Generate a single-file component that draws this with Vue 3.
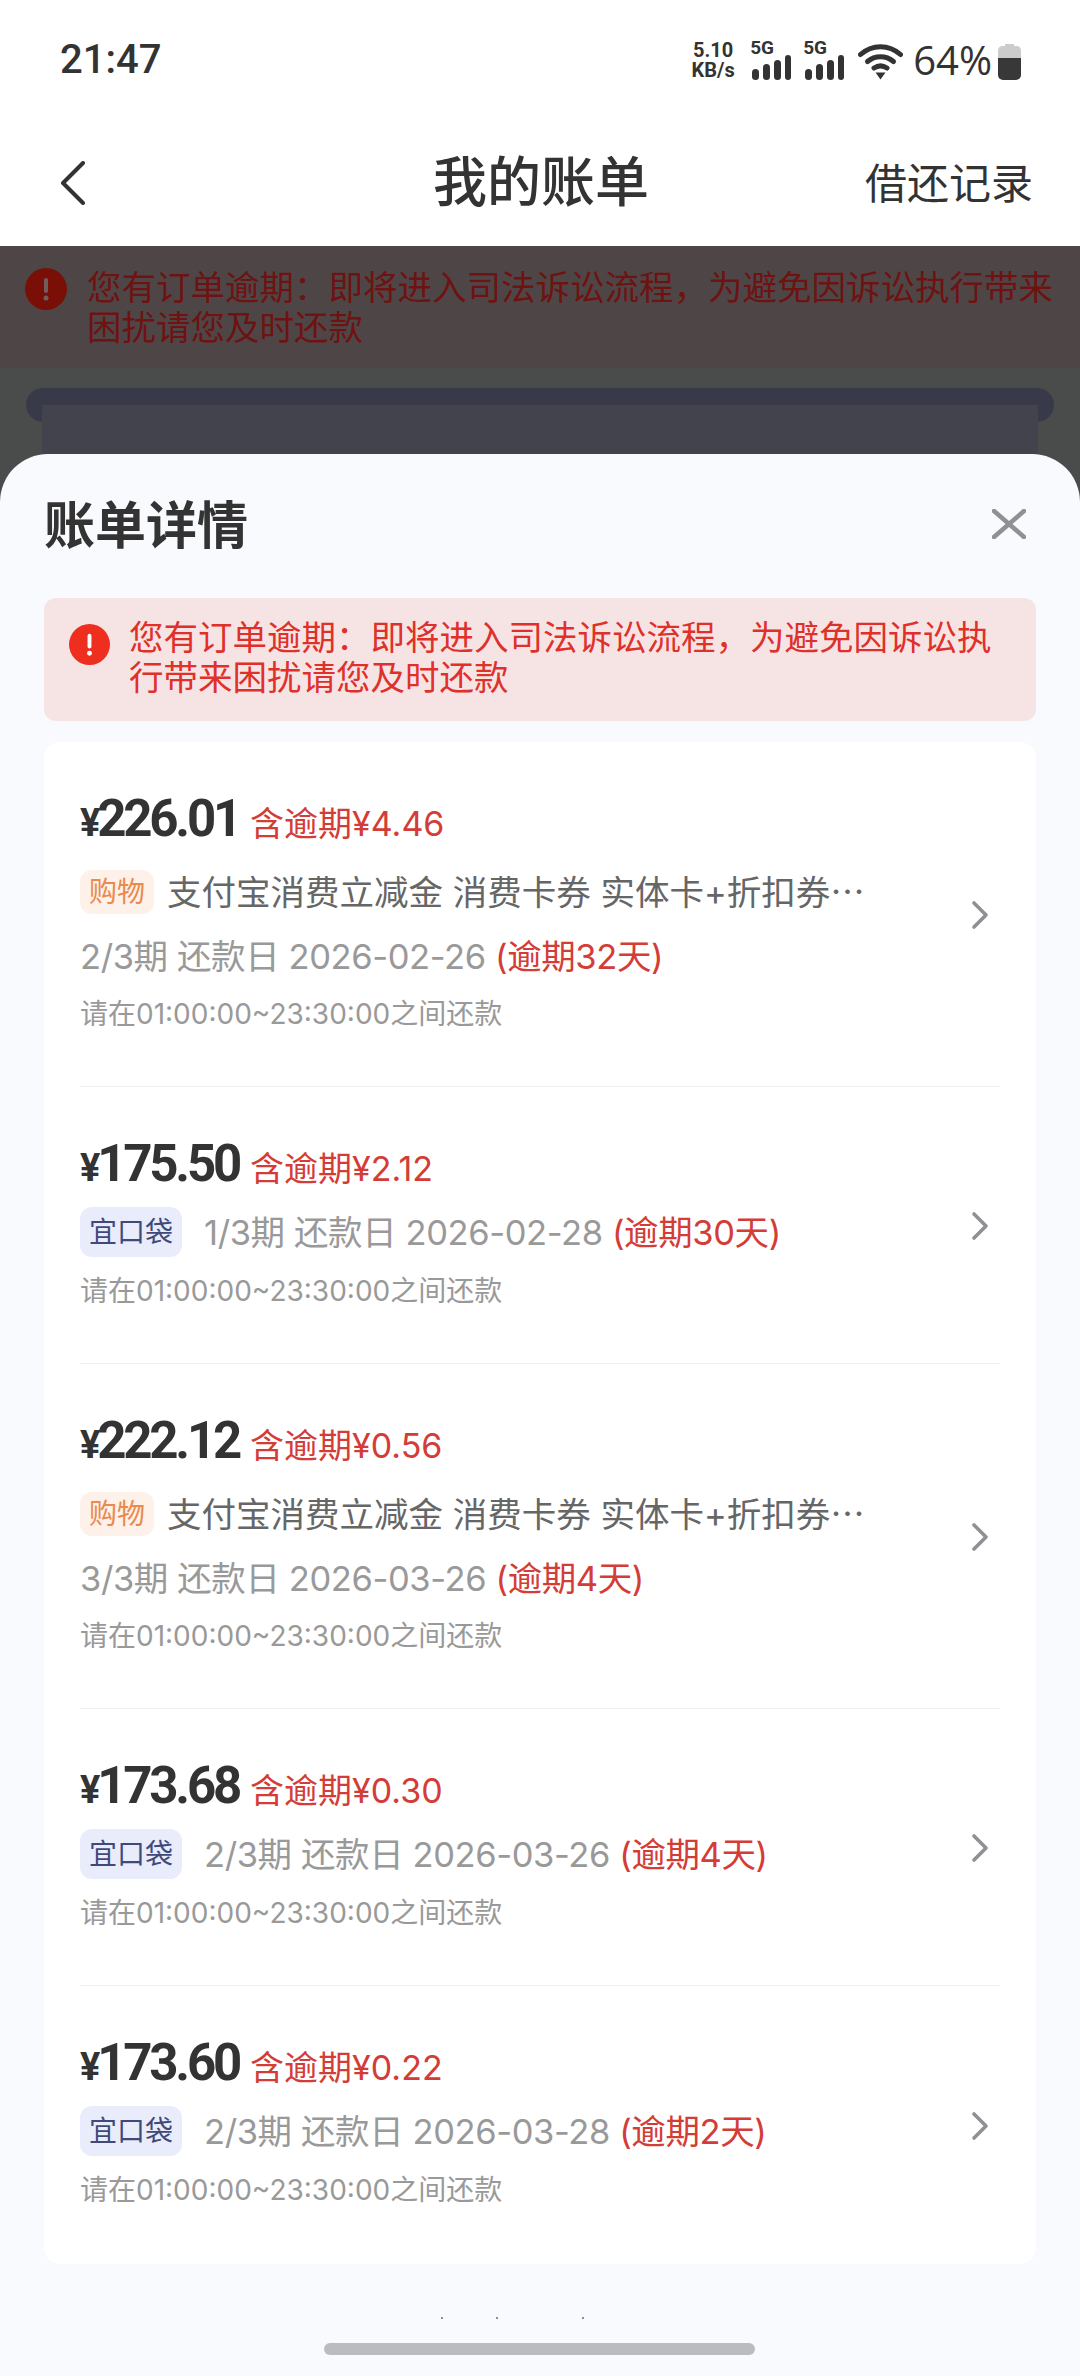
<script setup>
const rows = [
  { amount: '226.01', late: '4.46', tag: '购物', kind: 'shop', name: '支付宝消费立减金 消费卡券 实体卡+折扣券⋯', term: '2/3期 还款日 2026-02-26', over: '(逾期32天)' },
  { amount: '175.50', late: '2.12', tag: '宜口袋', kind: 'pocket', term: '1/3期 还款日 2026-02-28', over: '(逾期30天)' },
  { amount: '222.12', late: '0.56', tag: '购物', kind: 'shop', name: '支付宝消费立减金 消费卡券 实体卡+折扣券⋯', term: '3/3期 还款日 2026-03-26', over: '(逾期4天)' },
  { amount: '173.68', late: '0.30', tag: '宜口袋', kind: 'pocket', term: '2/3期 还款日 2026-03-26', over: '(逾期4天)' },
  { amount: '173.60', late: '0.22', tag: '宜口袋', kind: 'pocket', term: '2/3期 还款日 2026-03-28', over: '(逾期2天)' }
]
const signals = [0, 1]
</script>

<template>
  <div class="page">
    <div class="status">
      <span class="time">21:47</span>
      <div class="status-right">
        <div class="speed"><span>5.10</span><span>KB/s</span></div>
        <div v-for="s in signals" :key="s" class="sig">
          <span class="five">5G</span>
          <svg width="40" height="25" viewBox="0 0 40 25"><rect x="0" y="14" width="7" height="11" rx="3.5" fill="#333"/><rect x="11" y="9" width="7" height="16" rx="3.5" fill="#333"/><rect x="22" y="5" width="7" height="20" rx="3.5" fill="#333"/><rect x="33" y="0" width="6" height="25" rx="3" fill="#333"/></svg>
        </div>
        <svg class="wifi" width="45" height="37" viewBox="0 0 45 37" fill="none" stroke="#333" stroke-width="5" stroke-linecap="round"><path d="M2.5 11.5C14 1 31 1 42.5 11.5"/><path d="M9.5 18.5C17 12 28 12 35.5 18.5"/><path d="M16 25c4-2.6 9-2.6 13 0"/><path d="M17.5 29.5h10l-5 7z" fill="#333" stroke="none"/></svg>
        <span class="pct">64%</span>
        <svg width="23" height="36" viewBox="0 0 23 36"><path d="M7 0h9v2h2.5A4.5 4.5 0 0 1 23 6.500V14H0V6.500A4.500 4.500 0 0 1 4.500 2H7z" fill="#cccccc"/><path d="M0 14h23v17a5 5 0 0 1-5 5H5a5 5 0 0 1-5-5z" fill="#383838"/></svg>
      </div>
    </div>

    <div class="nav">
      <svg width="26" height="44" viewBox="0 0 26 44" fill="none" stroke="#333" stroke-width="4" stroke-linecap="round" stroke-linejoin="round"><path d="M23 2 3 22l20 20"/></svg>
      <span class="nav-title">我的账单</span>
      <span class="nav-link">借还记录</span>
    </div>

    <div class="under">
      <div class="under-alert">
        <svg class="dim-icon" width="42" height="42" viewBox="0 0 42 42"><circle cx="21" cy="21" r="21" fill="#7a0f08"/><rect x="19" y="10" width="4" height="15" rx="2" fill="#6f5f5c"/><circle cx="21" cy="30" r="2.500" fill="#6f5f5c"/></svg>
        <p>您有订单逾期：即将进入司法诉讼流程，为避免因诉讼执行带来困扰请您及时还款</p>
      </div>
      <div class="under-bar"></div>
      <div class="under-panel"></div>
    </div>

    <div class="sheet">
      <div class="sheet-head">
        <span class="sheet-title">账单详情</span>
        <svg class="close" width="34" height="30" viewBox="0 0 34 30" stroke="#8e9094" stroke-width="4.500" stroke-linecap="round"><path d="M2 2l30 26M32 2 2 28"/></svg>
      </div>

      <div class="alert">
        <svg class="alert-icon" width="41" height="41" viewBox="0 0 42 42"><circle cx="21" cy="21" r="21" fill="#ee2f20"/><rect x="19" y="10" width="4" height="15" rx="2" fill="#fff"/><circle cx="21" cy="30" r="2.500" fill="#fff"/></svg>
        <p>您有订单逾期：即将进入司法诉讼流程，为避免因诉讼执行带来困扰请您及时还款</p>
      </div>

      <div class="card">
        <div v-for="(r, i) in rows" :key="i" class="row" :class="{ 'row-wide': r.name }">
          <div class="row-main">
            <div class="amount-line">
              <span class="amount"><span class="yen">¥</span>{{ r.amount }}</span>
              <span class="late">含逾期¥{{ r.late }}</span>
            </div>
            <div class="tag-line">
              <span class="tag" :class="r.kind">{{ r.tag }}</span>
              <span v-if="r.name" class="name">{{ r.name }}</span>
              <span v-else class="term">{{ r.term }} <em>{{ r.over }}</em></span>
            </div>
            <div v-if="r.name" class="term term-line">{{ r.term }} <em>{{ r.over }}</em></div>
            <div class="hint">请在01:00:00~23:30:00之间还款</div>
          </div>
          <svg class="chev" width="20" height="30" viewBox="0 0 20 30" fill="none" stroke="#8e9094" stroke-width="3.600" stroke-linecap="round" stroke-linejoin="round"><path d="M4 3l12 12L4 27"/></svg>
        </div>
      </div>

      <div class="specks"><i></i><i></i><i></i></div>
      <div class="home"></div>
    </div>
  </div>
</template>

<style scoped>
.page {
  width: 1080px;
  height: 2376px;
  overflow: hidden;
  background: #fff;
  color: #333;
  font-family: Inter, "Noto Sans CJK SC", sans-serif;
}
.status {
  height: 120px;
  box-sizing: border-box;
  padding: 38px 59px 0 60px;
  display: flex;
  justify-content: space-between;
  align-items: flex-start;
  font-family: Roboto, sans-serif;
}
.time {
  font-size: 40px;
  line-height: 44px;
  font-weight: 500;
}
.status-right {
  display: flex;
  align-items: flex-end;
  height: 40px;
  margin-top: 2px;
}
.speed {
  width: 44px;
  display: flex;
  flex-direction: column;
  align-items: center;
  font-size: 20px;
  line-height: 20px;
  font-weight: 700;
  margin-right: 17px;
}
.sig {
  position: relative;
  width: 40px;
  height: 25px;
  margin-right: 13px;
}
.sig svg { display: block; }
.five {
  position: absolute;
  left: -2px;
  top: -16px;
  font-size: 19px;
  line-height: 18px;
  font-weight: 700;
}
.pct {
  font-size: 40px;
  line-height: 40px;
  margin-left: 10px;
  margin-right: 6px;
  font-family: "Open Sans", sans-serif;
}
.nav {
  height: 126px;
  box-sizing: border-box;
  padding: 0 47px 0 60px;
  display: flex;
  align-items: center;
  position: relative;
}
.nav-title {
  font-size: 54px;
  font-weight: 500;
  line-height: 70px;
  margin-left: 347px;
}
.nav-link {
  font-size: 42px;
  line-height: 60px;
  margin-left: auto;
  margin-top: -5px;
  font-family: "Noto Sans CJK SC", sans-serif;
}
.under {
  height: 256px;
  background: #4a4c4c;
  overflow: hidden;
}
.under-alert {
  height: 122px;
  box-sizing: border-box;
  background: #4e4646;
  padding: 22px 25px 0 25px;
  display: flex;
  gap: 20px;
  color: #6e1212;
  font-size: 34.500px;
  line-height: 40px;
}
.under-alert p { margin: 0; }
.dim-icon { flex: none; }
.under-bar {
  margin: 20px 26px 0;
  height: 34px;
  border-radius: 17px;
  background: #383a4a;
}
.under-panel {
  margin: -17px 42px 0;
  height: 100px;
  background: #42434c;
  position: relative;
}
.sheet {
  position: relative;
  height: 1922px;
  background: #f9fafe;
  border-radius: 48px 48px 0 0;
  margin-top: -48px;
  padding: 0 44px;
  box-sizing: border-box;
}
.sheet-head {
  height: 144px;
  display: flex;
  justify-content: space-between;
  align-items: center;
  padding-right: 10px;
}
.close { margin-top: -4px; }
.sheet-title {
  font-size: 51px;
  font-weight: 700;
  line-height: 70px;
}
.alert {
  height: 123px;
  box-sizing: border-box;
  background: #f6e4e5;
  border-radius: 12px;
  padding: 20px 30px 0 25px;
  display: flex;
  gap: 19px;
  color: #e0302a;
  font-size: 34.500px;
  line-height: 40px;
}
.alert p { margin: 0; }
.alert-icon { flex: none; margin-top: 6px; }
.card {
  margin-top: 21px;
  background: #fff;
  border-radius: 16px;
  padding: 0 36px;
}
.row {
  height: 277.500px;
  box-sizing: border-box;
  padding: 47px 0 0 0;
  display: flex;
  align-items: center;
  justify-content: space-between;
  border-bottom: 1px solid #eeeff2;
}
.row:last-child { border-bottom: 0; }
.row-wide { height: 344.500px; }
.row-main {
  align-self: flex-start;
  flex: 1;
  min-width: 0;
}
.amount-line {
  display: flex;
  align-items: baseline;
  height: 60px;
  line-height: 60px;
}
.amount {
  font-size: 51px;
  font-weight: 700;
  letter-spacing: -3.200px;
  font-family: Roboto, sans-serif;
}
.yen { font-size: 38px; }
.late {
  font-size: 34px;
  color: #d43c38;
  margin-left: 11px;
}
.tag-line {
  display: flex;
  align-items: center;
  height: 50px;
  margin-top: 13px;
}
.row-wide .tag-line { margin-top: 18px; }
.tag {
  line-height: 50px;
  height: 50px;
  padding: 0 9px;
  border-radius: 12px;
  font-size: 28px;
  flex: none;
}
.shop {
  height: 44px;
  line-height: 44px;
  background: #fdf1e9;
  color: #ea8a4c;
}
.pocket { background: #e9edfb; color: #3f4a7a; }
.name {
  font-size: 34.500px;
  color: #666;
  margin-left: 13px;
  white-space: nowrap;
  position: relative;
  top: -2px;
}
.term {
  font-size: 34.500px;
  letter-spacing: -0.400px;
  color: #999;
  white-space: nowrap;
  margin-left: 22px;
  position: relative;
  top: -2px;
}
.term em {
  font-style: normal;
  color: #d43c38;
}
.term-line {
  margin-left: 0;
  line-height: 50px;
  margin-top: 15px;
  top: 0;
}
.hint {
  font-size: 28px;
  line-height: 40px;
  color: #999;
  margin-top: 14px;
}
.term-line + .hint { margin-top: 12px; }
.chev {
  flex: none;
  margin-top: -48px;
  margin-left: -20px;
  transform: translate(-10px, 2px);
}
.specks {
  display: flex;
  height: 2px;
  margin-top: 53px;
  padding-left: 397px;
}
.specks i {
  width: 2px;
  height: 2px;
  background: #8f9094;
  margin-right: 53px;
}
.specks i:nth-child(2) { margin-right: 84px; }
.home {
  width: 431px;
  height: 12px;
  margin: 24px 0 0 280px;
  border-radius: 6px;
  background: #bcbcc0;
}
</style>

<style>
html, body { margin: 0; padding: 0; background: #f9fafe; }
</style>
